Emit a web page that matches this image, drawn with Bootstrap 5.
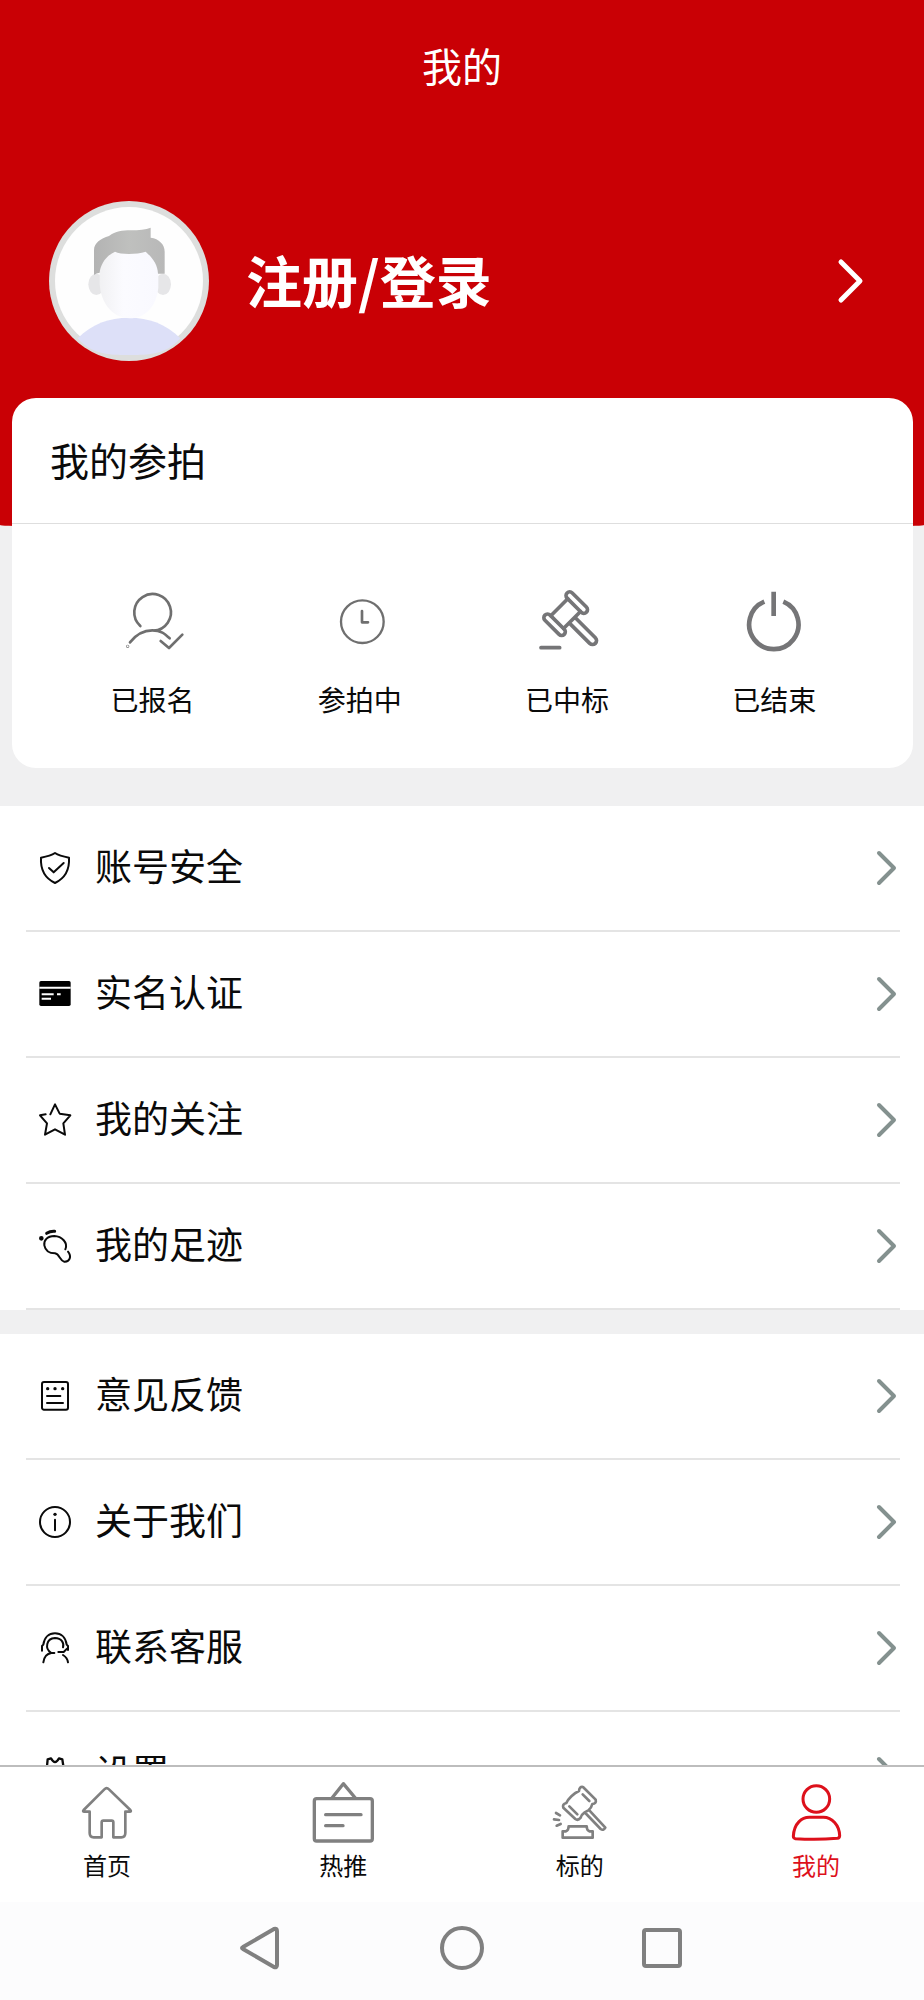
<!DOCTYPE html>
<html lang="zh-CN">
<head>
<meta charset="utf-8">
<meta name="viewport" content="width=device-width, initial-scale=1">
<title>我的</title>
<link href="https://cdn.jsdelivr.net/npm/bootstrap@5.3.0/dist/css/bootstrap.min.css" rel="stylesheet">
<style>
  body { font-family: "Noto Sans CJK SC", sans-serif; color: #0a0a0a; background: #fff; }
  svg { overflow: visible; flex: none; display: block; fill: none; stroke: currentColor; stroke-linecap: round; stroke-linejoin: round; }
  a { color: inherit; text-decoration: none; }
  .brush { font-family: "STXingkai", "KaiTi", "Noto Sans CJK SC", serif; }
  .scroller { background: #f0f0f1; min-height: 0; }
  .hero { background: #c90005; padding-bottom: 168px; border-radius: 0 0 50% 50% / 0 0 4px 4px; }
  .hero-title { font-size: 40px; line-height: 130px; }
  .profile { padding: 71px 60px 0 49px; gap: 37px; }
  .profile-name { font-size: 56px; line-height: 80px; padding-bottom: 4px; }
  .bids { margin: -131px 11px 38px 12px; border-radius: 24px; }
  .bids-title { font-size: 39px; line-height: 122px; padding: 0 0 3px 38px; border-bottom: 1px solid #dedede; }
  .bids-grid { padding: 68px 35px 49px 37px; }
  .bids-label { font-size: 28px; line-height: 40px; margin-top: 27px; }
  .menu-block { margin-bottom: 24px; padding: 0 24px 0 26px; }
  .menu-row { height: 126px; padding: 0 3px 0 13px; gap: 24px; font-size: 37px; border-bottom: 2px solid #e4e4e4; }
  .menu-row span { padding-bottom: 4px; }
  .arrow { color: #84918f; }
  .tabs { border-top: 2px solid #bdbdbd; padding: 16px 68px 0 67px; height: 137px; }
  .tab-link { width: 80px; font-size: 24px; line-height: 32px; }
  .tab-link svg, .sys svg { color: #808080; }
  .tab-link span { margin-top: 6px; }
  .tab-link.active, .tab-link.active svg { color: #dd101b; }
  .sys { background: #fcfcfd; height: 98px; padding: 0 240px 6px 238px; }
</style>
</head>
<body class="d-flex flex-column vh-100 overflow-hidden">

<main class="scroller flex-grow-1 overflow-hidden">
  <header class="hero text-white">
    <h1 class="hero-title brush text-center fw-normal m-0">我的</h1>
    <a href="#login" class="profile d-flex align-items-center">
      <svg width="160" height="160" viewBox="0 0 480 480" style="stroke:none">
        <defs>
          <clipPath id="face"><circle cx="240" cy="240" r="238"/></clipPath>
          <linearGradient id="skin"><stop offset="0" stop-color="#f1f1f3"/><stop offset=".4" stop-color="#fbfbff"/><stop offset="1" stop-color="#f9f9ff"/></linearGradient>
          <linearGradient id="hair"><stop offset="0" stop-color="#b3b3b3"/><stop offset=".5" stop-color="#bfc0be"/><stop offset="1" stop-color="#b8b8b8"/></linearGradient>
        </defs>
        <circle cx="240" cy="240" r="240" fill="#dddedd"/>
        <circle cx="240" cy="240" r="222" fill="#fefefe"/>
        <g clip-path="url(#face)">
          <path d="M86 412C130 368 180 350 240 350S350 368 394 412C350 462 300 462 240 462S130 462 86 412Z" fill="#dde0f8"/>
        </g>
        <ellipse cx="142" cy="250" rx="24" ry="32" fill="#e6e6e8"/>
        <ellipse cx="342" cy="250" rx="24" ry="32" fill="#e6e6e8"/>
        <path d="M152 215C156 170 185 140 240 140S322 170 328 215V260C322 315 290 352 242 352S156 310 152 250Z" fill="url(#skin)"/>
        <path d="M135 222V148C135 125 155 113 180 105C200 90 220 88 245 88C270 87 290 86 305 80V110C330 113 347 130 347 152V218H327C326 190 310 170 290 152C262 161 215 161 198 152C170 165 155 190 152 215Q142 216 135 222Z" fill="url(#hair)"/>
      </svg>
      <span class="profile-name fw-bold flex-grow-1">注册/登录</span>
      <svg width="26" height="44" viewBox="0 0 26 44" stroke-width="5"><path d="M3 3 22 22 3 41"/></svg>
    </a>
  </header>

  <section class="bids bg-white position-relative">
    <h2 class="bids-title fw-normal m-0">我的参拍</h2>
    <div class="bids-grid row g-0 text-center">
      <a href="#signed" class="col d-flex flex-column align-items-center">
        <svg width="60" height="60" viewBox="0 0 180 180" stroke-width="8" color="#6f6f6f">
          <path d="M52 102A55 55 0 1 1 92 116M21 151C42 124 62 115 88 115S125 125 140 139M113 147 138 168 178 128"/><circle cx="14" cy="163" r="1"/>
        </svg>
        <span class="bids-label">已报名</span>
      </a>
      <a href="#bidding" class="col d-flex flex-column align-items-center">
        <svg width="60" height="60" viewBox="0 0 180 180" stroke-width="7" color="#6f6f6f">
          <circle cx="97" cy="89" r="64"/><path d="M96 57V91H114" stroke-width="8"/>
        </svg>
        <span class="bids-label">参拍中</span>
      </a>
      <a href="#won" class="col d-flex flex-column align-items-center">
        <svg width="60" height="60" viewBox="0 0 180 180" stroke-width="11" color="#757577">
          <g transform="translate(86 65) rotate(45)">
            <rect x="-41" y="-58" width="82" height="22" rx="11"/><rect x="-41" y="36" width="82" height="22" rx="11"/>
            <path d="M-27-36V36M27-36V36M27-12H114A12 12 0 0 1 114 12H27"/>
          </g>
          <path d="M12 167H68" stroke-width="11"/>
        </svg>
        <span class="bids-label">已中标</span>
      </a>
      <a href="#ended" class="col d-flex flex-column align-items-center">
        <svg width="60" height="60" viewBox="0 0 180 180" stroke-width="14" color="#757577">
          <path d="M61 29A74 74 0 1 0 118 29M89-1V72" style="stroke-linecap:butt"/>
        </svg>
        <span class="bids-label">已结束</span>
      </a>
    </div>
  </section>

  <nav class="menu-block bg-white">
    <a href="#security" class="menu-row d-flex align-items-center">
      <svg width="32" height="32" viewBox="0 0 96 96" stroke-width="6"><path d="M48 3C36 11 22 14 6 17C4 52 16 78 48 93C80 78 92 52 90 17C74 14 60 11 48 3ZM30 48 44 61 74 33"/></svg>
      <span class="flex-grow-1">账号安全</span>
      <svg class="arrow" width="20" height="34" viewBox="0 0 20 34" stroke-width="4"><path d="M2 2 17 17 2 32"/></svg>
    </a>
    <a href="#realname" class="menu-row d-flex align-items-center">
      <svg width="32" height="32" viewBox="0 0 96 96"><rect x="1" y="9" width="94" height="75" rx="5" fill="#000" stroke="none"/><path d="M1 29H95M8 49H44M54 49H65M8 62H36" stroke="#fff" stroke-width="6" style="stroke-linecap:butt"/></svg>
      <span class="flex-grow-1">实名认证</span>
      <svg class="arrow" width="20" height="34" viewBox="0 0 20 34" stroke-width="4"><path d="M2 2 17 17 2 32"/></svg>
    </a>
    <a href="#follow" class="menu-row d-flex align-items-center">
      <svg width="32" height="32" viewBox="0 0 96 96" stroke-width="6"><path d="M20 31 3 34 24 58 18 92 48 76 78 92 73 58 94 34 62 29 48 1 34 31"/></svg>
      <span class="flex-grow-1">我的关注</span>
      <svg class="arrow" width="20" height="34" viewBox="0 0 20 34" stroke-width="4"><path d="M2 2 17 17 2 32"/></svg>
    </a>
    <a href="#history" class="menu-row d-flex align-items-center">
      <svg width="32" height="32" viewBox="0 0 96 96" stroke-width="6"><circle cx="7" cy="25" r="4" fill="#000"/><path d="M23 10Q34 3 47 4" stroke-width="9"/><path d="M79 58C88 38 68 19 46 18C24 18 14 32 16 46C20 66 34 70 48 70C62 72 62 92 76 95C92 96 99 80 87 65"/></svg>
      <span class="flex-grow-1">我的足迹</span>
      <svg class="arrow" width="20" height="34" viewBox="0 0 20 34" stroke-width="4"><path d="M2 2 17 17 2 32"/></svg>
    </a>
  </nav>

  <nav class="menu-block bg-white">
    <a href="#feedback" class="menu-row d-flex align-items-center">
      <svg width="32" height="32" viewBox="0 0 96 96" stroke-width="6"><rect x="9" y="6" width="78" height="83" rx="6"/><path d="M24 48H64M24 69H72"/><path d="M26 26h.1M48 26h.1M71 26h.1" stroke-width="10"/></svg>
      <span class="flex-grow-1">意见反馈</span>
      <svg class="arrow" width="20" height="34" viewBox="0 0 20 34" stroke-width="4"><path d="M2 2 17 17 2 32"/></svg>
    </a>
    <a href="#about" class="menu-row d-flex align-items-center">
      <svg width="32" height="32" viewBox="0 0 96 96" stroke-width="6"><circle cx="48" cy="48" r="45"/><path d="M48 41V73"/><path d="M48 25h.1" stroke-width="10"/></svg>
      <span class="flex-grow-1">关于我们</span>
      <svg class="arrow" width="20" height="34" viewBox="0 0 20 34" stroke-width="4"><path d="M2 2 17 17 2 32"/></svg>
    </a>
    <a href="#service" class="menu-row d-flex align-items-center">
      <svg width="32" height="32" viewBox="0 0 96 96" stroke-width="6"><path d="M9 56V42L13 38C16 16 30 4 48 4S80 16 83 38L87 42V54M37 63C16 50 22 19 48 18C68 18 76 34 72 46M58 60H74L84 50M13 91C15 76 24 65 37 63H46M72 69C80 74 86 82 87 91"/></svg>
      <span class="flex-grow-1">联系客服</span>
      <svg class="arrow" width="20" height="34" viewBox="0 0 20 34" stroke-width="4"><path d="M2 2 17 17 2 32"/></svg>
    </a>
    <a href="#settings" class="menu-row d-flex align-items-center">
      <svg width="32" height="32" viewBox="0 0 96 96" stroke-width="7"><path d="M24 24 26 4 36 1Q48 24 60 1L70 4 73 24 90 26 94 38Q78 48 94 60L90 72 73 74 70 90 60 93Q48 76 36 93L26 90 24 74 6 72 2 60Q18 48 2 38L6 26Z"/><circle cx="48" cy="48" r="14"/></svg>
      <span class="flex-grow-1">设置</span>
      <svg class="arrow" width="20" height="34" viewBox="0 0 20 34" stroke-width="4"><path d="M2 2 17 17 2 32"/></svg>
    </a>
  </nav>
</main>

<nav class="tabs bg-white d-flex justify-content-between flex-shrink-0 brush">
  <a href="#home" class="tab-link d-flex flex-column align-items-center">
    <svg width="60" height="60" viewBox="0 0 180 180" stroke-width="8"><path d="M20 81 82 19Q89 12 96 19L160 81Q164 86 158 86H145V150Q145 163 133 163H109V118Q109 113 104 113H79Q74 113 74 118V163H50Q38 163 38 150V86H22Q16 86 20 81Z"/></svg>
    <span>首页</span>
  </a>
  <a href="#hot" class="tab-link d-flex flex-column align-items-center">
    <svg width="60" height="60" viewBox="0 0 180 180" stroke-width="10"><rect x="4" y="47" width="174" height="127" rx="7"/><path d="M57 45 91 2 127 45M38 95H144M38 128H90"/></svg>
    <span>热推</span>
  </a>
  <a href="#lots" class="tab-link d-flex flex-column align-items-center">
    <svg width="60" height="60" viewBox="0 0 180 180" stroke-width="8"><path d="M87 24Q88 10 99 12L137 50Q140 62 127 63Q124 76 115 82L104 88Q95 94 92 104Q84 114 76 108L40 74Q36 64 49 60C54 48 72 30 87 24ZM98 34 118 54M58 70 82 94M106 90 152 138Q160 144 166 134L118 82M18 90 30 97M12 109 27 111M20 128 32 123M38 164V145H48Q56 142 56 130H110Q110 142 118 145H128V164Z"/></svg>
    <span>标的</span>
  </a>
  <a href="#mine" class="tab-link active d-flex flex-column align-items-center" aria-current="page">
    <svg width="60" height="60" viewBox="0 0 180 180" stroke-width="9"><circle cx="91" cy="48" r="40"/><path d="M22 160C24 120 48 103 70 103H112C138 103 160 126 161 158Q161 165 154 166Q91 171 28 167Q22 166 22 160Z"/></svg>
    <span>我的</span>
  </a>
</nav>

<div class="sys d-flex justify-content-between align-items-center flex-shrink-0">
  <a href="#back" aria-label="返回"><svg width="44" height="44" viewBox="0 0 44 44" stroke-width="4"><path d="M5 21 36 3Q39 2 39 5V39Q39 42 36 41L5 23Q3 22 5 21Z"/></svg></a>
  <a href="#desktop" aria-label="主屏幕"><svg width="44" height="44" viewBox="0 0 44 44" stroke-width="4"><circle cx="23" cy="22" r="20"/></svg></a>
  <a href="#recent" aria-label="最近任务"><svg width="44" height="44" viewBox="0 0 44 44" stroke-width="4"><rect x="4" y="4" width="36" height="36" rx="2"/></svg></a>
</div>

<script src="https://cdn.jsdelivr.net/npm/bootstrap@5.3.0/dist/js/bootstrap.bundle.min.js"></script>
</body>
</html>
